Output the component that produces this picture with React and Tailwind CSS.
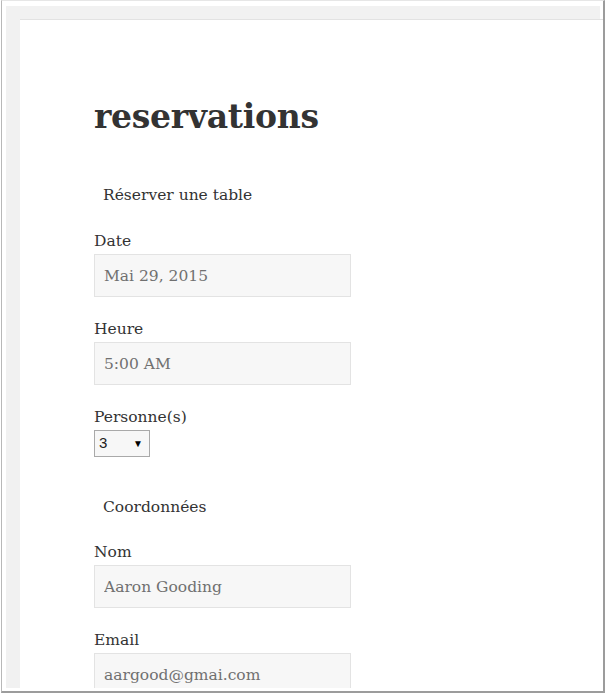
import { useState } from 'react';

const serif = "font-['DejaVu_Serif',serif]";

const Field = ({ label, value }) => (
  <div className="mb-[19px]">
    <label className="block leading-[26px] text-[#333333]">{label}</label>
    <input
      readOnly
      value={value}
      className={`block w-[257px] h-[43px] px-[9px] bg-[#f7f7f7] border border-[#e3e3e3] text-[#707070] text-[15.5px] outline-none ${serif}`}
    />
  </div>
);

const App = () => {
  const [people] = useState('3');

  return (
    <div className="h-[695px] bg-white pl-[1px]">
      <div className="w-[604px] h-[693px] border-l border-l-[#b8b8b8] border-t border-t-[#e6e6e6] border-r-2 border-r-[#9c9c9c] border-b-2 border-b-[#9c9c9c] pl-[4px] pt-[5px] pb-[3px]">
        <div className="h-full flex flex-col bg-white">
          {/* bandeau du haut */}
          <div className="h-[13px] mr-[3px] bg-[#f1f1f1]" />
          <div className="flex flex-1 min-h-0">
            {/* bande latérale */}
            <div className="w-[14px] -mt-[1px] bg-[#f1f1f1]" />
            <div className={`flex-1 min-h-0 overflow-hidden border-t border-t-[#e2e2e2] pl-[74px] text-[15.5px] ${serif}`}>
              <h1 className="mt-[77px] text-[33px] leading-[40px] font-bold text-[#333333] tracking-[-0.3px]">
                reservations
              </h1>

              <form className="mt-[45px]">
                <fieldset>
                  <legend className="pl-[9px] leading-[26px] mb-[20px] text-[#333333]">Réserver une table</legend>
                  <Field label="Date" value="Mai 29, 2015" />
                  <Field label="Heure" value="5:00 AM" />
                  <div>
                    <label className="block leading-[26px] text-[#333333]">Personne(s)</label>
                    <div className="w-[56px] h-[27px] flex items-center justify-between pl-[4px] pr-[6px] border border-[#a9a9a9] bg-[#f7f7f7] font-['Liberation_Sans',sans-serif] text-[15px] text-[#222222]">
                      <span>{people}</span>
                      <span className="text-[10px] text-black">▼</span>
                    </div>
                  </div>
                </fieldset>

                <fieldset className="mt-[37px]">
                  <legend className="pl-[9px] leading-[26px] mb-[19px] text-[#333333]">Coordonnées</legend>
                  <Field label="Nom" value="Aaron Gooding" />
                  <Field label="Email" value="aargood@gmai.com" />
                </fieldset>
              </form>
            </div>
          </div>
        </div>
      </div>
    </div>
  );
};

export default App;
